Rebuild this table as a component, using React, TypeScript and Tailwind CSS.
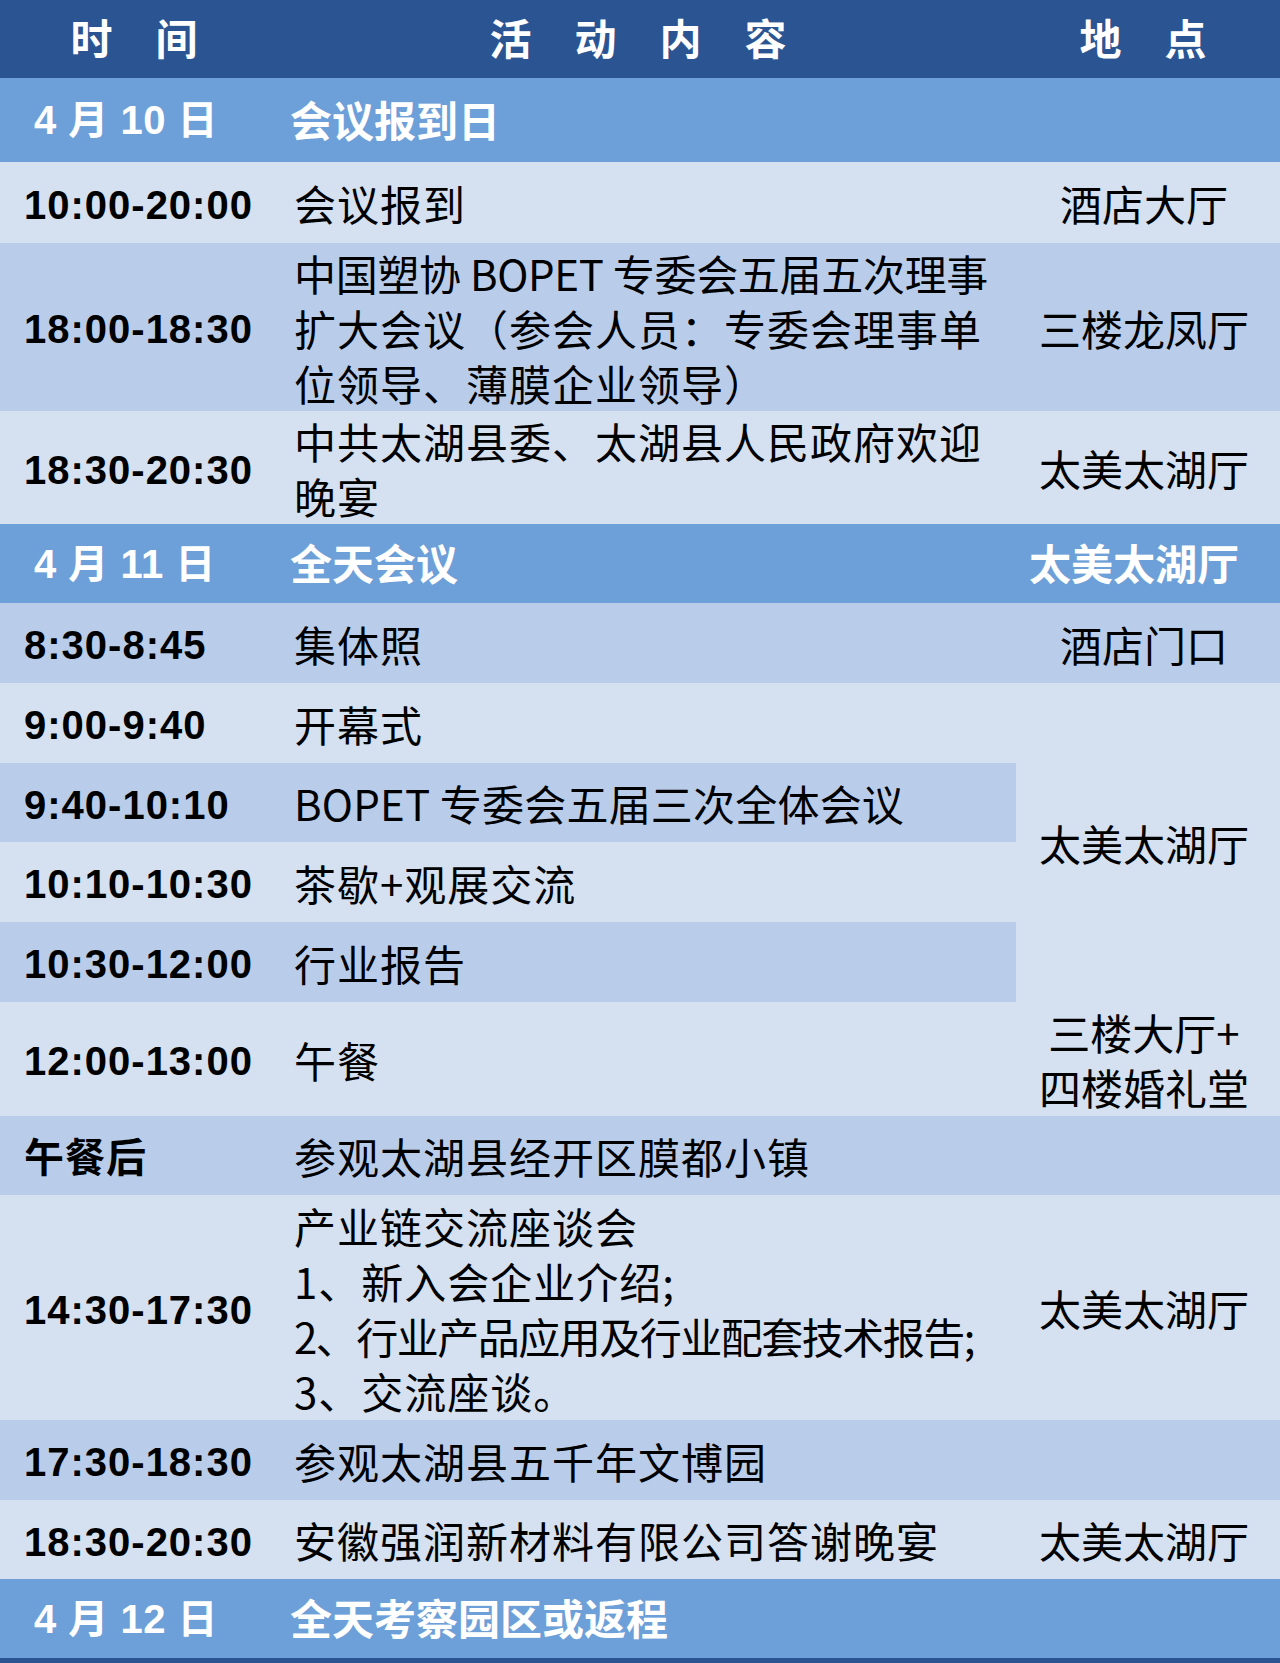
import React from "react";

type Row = {
  kind: "date" | "item";
  time: string;
  content: React.ReactNode;
  place?: React.ReactNode;
  placeSpan?: number;
  noPlace?: boolean;
  shade?: "light" | "mid";
  h: string;
  tight?: boolean;
};

const rows: Row[] = [
  { kind: "date", time: "4 月 10 日", content: "会议报到日", place: "", h: "h-[84px]" },
  { kind: "item", time: "10:00-20:00", content: "会议报到", place: "酒店大厅", shade: "light", h: "h-[81px]" },
  {
    kind: "item",
    time: "18:00-18:30",
    content: (
      <>
        <span className="tracking-[-0.3px]">中国塑协 BOPET 专委会五届五次理事</span>
        <br />
        扩大会议（参会人员：专委会理事单
        <br />
        位领导、薄膜企业领导）
      </>
    ),
    place: "三楼龙凤厅",
    shade: "mid",
    h: "h-[168px]",
  },
  {
    kind: "item",
    time: "18:30-20:30",
    content: (
      <>
        中共太湖县委、太湖县人民政府欢迎
        <br />
        晚宴
      </>
    ),
    place: "太美太湖厅",
    shade: "light",
    h: "h-[113px]",
  },
  { kind: "date", time: "4 月 11 日", content: "全天会议", place: "太美太湖厅", h: "h-[79px]" },
  { kind: "item", time: "8:30-8:45", content: "集体照", place: "酒店门口", shade: "mid", h: "h-[80px]" },
  { kind: "item", time: "9:00-9:40", content: "开幕式", place: "太美太湖厅", placeSpan: 4, shade: "light", h: "h-[80px]" },
  {
    kind: "item",
    time: "9:40-10:10",
    content: <span className="tracking-[0.2px]">BOPET 专委会五届三次全体会议</span>,
    noPlace: true,
    shade: "mid",
    h: "h-[79px]",
  },
  { kind: "item", time: "10:10-10:30", content: "茶歇+观展交流", noPlace: true, shade: "light", h: "h-[80px]" },
  { kind: "item", time: "10:30-12:00", content: "行业报告", noPlace: true, shade: "mid", h: "h-[80px]" },
  {
    kind: "item",
    time: "12:00-13:00",
    content: "午餐",
    place: (
      <>
        三楼大厅+
        <br />
        四楼婚礼堂
      </>
    ),
    shade: "light",
    h: "h-[114px]",
  },
  { kind: "item", time: "午餐后", content: "参观太湖县经开区膜都小镇", place: "", shade: "mid", h: "h-[79px]" },
  {
    kind: "item",
    time: "14:30-17:30",
    content: (
      <>
        产业链交流座谈会
        <br />
        1、新入会企业介绍;
        <br />
        <span className="tracking-[-1.5px]">2、行业产品应用及行业配套技术报告;</span>
        <br />
        3、交流座谈。
      </>
    ),
    place: "太美太湖厅",
    shade: "light",
    h: "h-[225px]",
  },
  { kind: "item", time: "17:30-18:30", content: "参观太湖县五千年文博园", place: "", shade: "mid", h: "h-[80px]" },
  { kind: "item", time: "18:30-20:30", content: "安徽强润新材料有限公司答谢晚宴", place: "太美太湖厅", shade: "light", h: "h-[79px]" },
  { kind: "date", time: "4 月 12 日", content: "全天考察园区或返程", place: "", h: "h-[79px]" },
];

const Spaced = ({ text }: { text: string }) => (
  <div className="flex justify-center gap-[43px]">
    {text.split("").map((c, i) => (
      <span key={i}>{c}</span>
    ))}
  </div>
);

export default function App() {
  return (
    <div className="w-[1280px] bg-[#2a5592] pb-[5px] font-['Noto_Sans_CJK_SC',sans-serif]">
      <table className="w-full table-fixed border-collapse">
        <colgroup>
          <col className="w-[280px]" />
          <col className="w-[736px]" />
          <col className="w-[264px]" />
        </colgroup>
        <thead>
          <tr className="h-[78px] bg-[#2a5592] text-[42px] font-bold text-white">
            <th className="pr-[12px] pb-[6px] font-bold"><Spaced text="时间" /></th>
            <th className="pr-[20px] pb-[6px] font-bold"><Spaced text="活动内容" /></th>
            <th className="pr-[10px] pb-[6px] font-bold"><Spaced text="地点" /></th>
          </tr>
        </thead>
        <tbody>
          {rows.map((r, i) => {
            if (r.kind === "date") {
              return (
                <tr key={i} className={`${r.h} bg-[#6d9fd8] text-white font-bold`}>
                  <td className="pl-[34px] whitespace-nowrap align-middle text-[40px] font-['Liberation_Sans','Noto_Sans_CJK_SC',sans-serif] tracking-[0.5px]">
                    {r.time}
                  </td>
                  <td className="pl-[10px] pb-[4px] align-middle text-[42px] whitespace-nowrap">{r.content}</td>
                  <td className="pr-[28px] pb-[4px] text-center align-middle text-[42px] whitespace-nowrap">{r.place}</td>
                </tr>
              );
            }
            const bg = r.shade === "mid" ? "bg-[#b9cdea]" : "bg-[#d5e0f0]";
            return (
              <tr key={i} className={`${r.h} ${bg} text-black`}>
                <td className="pl-[24px] pt-[4px] whitespace-nowrap align-middle text-[40px] font-bold tracking-[1px] font-['Liberation_Sans','Noto_Sans_CJK_SC',sans-serif]">
                  {r.time}
                </td>
                <td className="pl-[14px] align-middle text-[42px] leading-[55px] tracking-[1px] whitespace-nowrap">
                  {r.content}
                </td>
                {!r.noPlace && (
                  <td
                    rowSpan={r.placeSpan}
                    className={`${r.placeSpan ? "bg-[#d5e0f0]" : ""} pr-[8px] text-center align-middle text-[42px] leading-[55px] whitespace-nowrap`}
                  >
                    {r.place}
                  </td>
                )}
              </tr>
            );
          })}
        </tbody>
      </table>
    </div>
  );
}
